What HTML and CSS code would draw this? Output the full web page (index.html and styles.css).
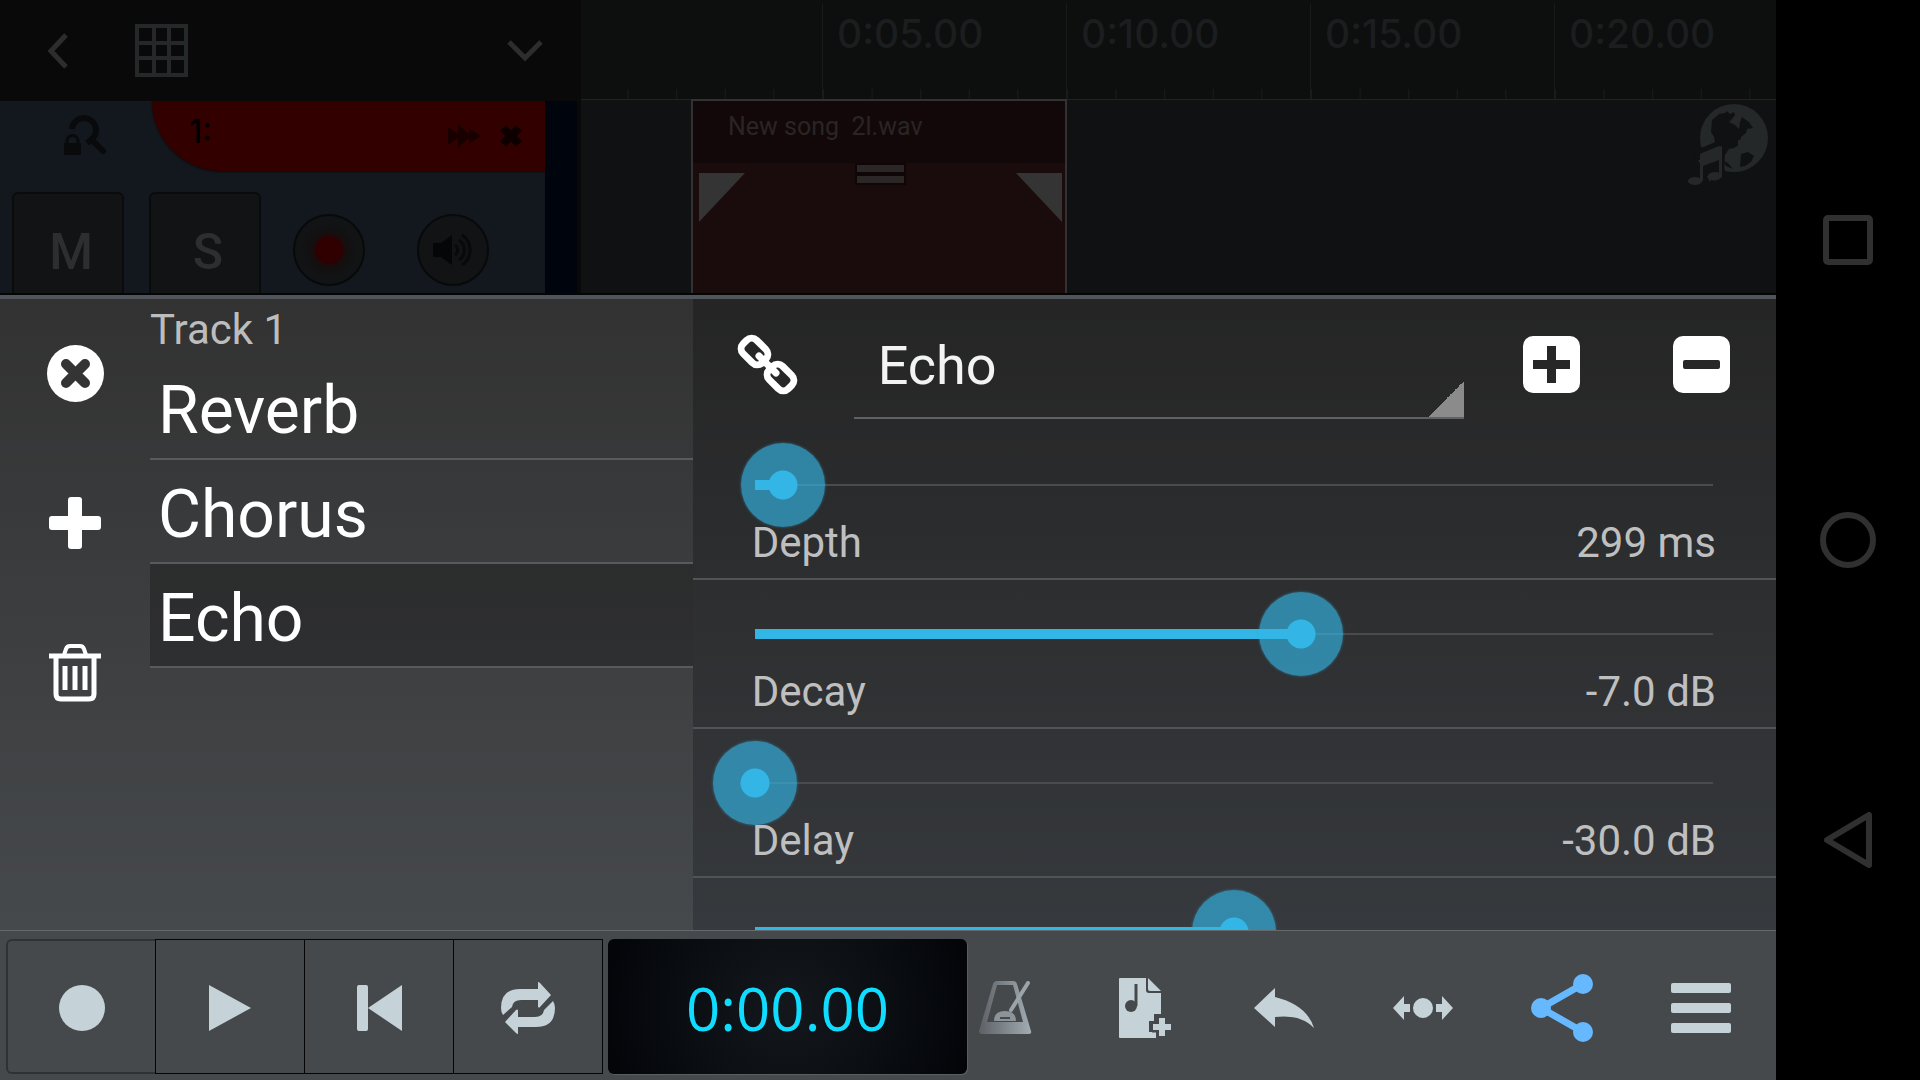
FILE: index.html
```html
<!DOCTYPE html>
<html lang="en">
  <head>
    <meta charset="UTF-8" />
    <meta name="viewport" content="width=device-width, initial-scale=1.0" />
    <title>Track 1 - Effects</title>
    <link rel="stylesheet" href="styles.css">
  </head>
  <body>
    <main class="app">
      <section class="arranger">
        <div class="tracks">
          <header class="tracks-bar">
            <button type="button" class="back" aria-label="Back">
              <svg width="20" height="36" viewBox="0 0 20 36"><path d="M18 2 3 18l15 16" fill="none" stroke="#2d2d2d" stroke-width="5" /></svg>
            </button>
            <button type="button" class="grid-btn" aria-label="Grid">
              <svg width="53" height="53" viewBox="0 0 53 53"><path d="M2 2h49v49H2zM19 2v49M34 2v49M2 19h49M2 34h49" fill="none" stroke="#252828" stroke-width="4" /></svg>
            </button>
            <button type="button" aria-label="Expand">
              <svg width="36" height="22" viewBox="0 0 36 22"><path d="M2 2l16 16L34 2" fill="none" stroke="#2d2d2d" stroke-width="5" /></svg>
            </button>
          </header>
          <div class="track">
            <div class="track-body">
              <div class="track-head">
                <button type="button" class="zoom-lock" aria-label="Lock zoom">
                  <svg width="44" height="42" viewBox="0 0 44 42">
                    <path d="M9 14a12 12 0 1 1 20 10l-5 4" fill="none" stroke="#090a0b" stroke-width="6" />
                    <path d="M29 25l11 11" stroke="#090a0b" stroke-width="6" stroke-linecap="round" />
                    <path d="M4 29v-3a5 5 0 0 1 11 0v3" fill="none" stroke="#090a0b" stroke-width="3" />
                    <path d="M1 28h17v12H1z" fill="#090a0b" />
                  </svg>
                </button>
                <div class="track-name">
                  <span>1:</span>
                  <svg width="33" height="26" viewBox="0 0 33 26"><path d="M0 4l10 7V1l11 10V5l12 8-12 8v-6L10 25V15L0 22z" fill="#180000" /></svg>
                  <svg width="24" height="24" viewBox="0 0 24 24"><path d="M4 4l16 16M20 4 4 20" fill="none" stroke="#0d0000" stroke-width="8" /></svg>
                </div>
              </div>
              <div class="track-buttons">
                <button type="button" class="key">M</button>
                <button type="button" class="key">S</button>
                <button type="button" class="round" aria-label="Arm recording"><span class="rec-dot"></span></button>
                <button type="button" class="round" aria-label="Monitor">
                  <svg width="40" height="36" viewBox="0 0 40 36">
                    <path d="M0 11h8L19 3v30L8 25H0z" fill="#050607" />
                    <path d="M22 13a6 6 0 0 1 0 10M26 8a12 12 0 0 1 0 20M29 3a18 18 0 0 1 0 30" fill="none" stroke="#08090a" stroke-width="3" />
                  </svg>
                </button>
              </div>
            </div>
          </div>
        </div>
        <div class="timeline">
          <div class="ruler">
            <div class="mark first"></div>
            <div class="mark">0:05.00</div>
            <div class="mark">0:10.00</div>
            <div class="mark">0:15.00</div>
            <div class="mark">0:20.00</div>
          </div>
          <div class="lane">
            <div class="clip">
              <div class="clip-name">New song&nbsp; 2l.wav</div>
              <div class="clip-handles">
                <svg width="46" height="49" viewBox="0 0 46 49"><path d="M0 0h46L0 49z" fill="#343434" /></svg>
                <div class="grip"><i></i><i></i></div>
                <svg width="46" height="49" viewBox="0 0 46 49"><path d="M0 0h46v49z" fill="#343434" /></svg>
              </div>
            </div>
            <button type="button" class="online" aria-label="Online songs">
              <svg width="80" height="82" viewBox="0 0 80 82">
                <circle cx="46" cy="34" r="34" fill="#252829" />
                <path d="M24 16l7-6 6-1 2-2 3 3 4-2 1 3-3 4-3 3 6 3 4 4 1-7 2-5 4 3 3 2 4 6-6 1-1 4-5 4-2 8-5 3-5 1-4 6-1 6 4 2 5 6-7-3-5-8-5-9-2-12-3-5zM53 50l7-2 6 4-3 6-6 4-5 1z" fill="#101113" />
                <path d="M50 36q4-1 5 2l-1 7-4-2z" fill="#252829" />
                <path d="M10 56V48l24-10v34a8 8 0 0 1-12 6" fill="#252829" stroke="#101113" stroke-width="5" />
                <path d="M12 50l22-8v12l-19 7v13H12z" fill="#252829" />
                <path d="M15 62l16-6v16H15z" fill="#101113" />
                <path d="M31 52h3v20h-3zM12 55h3v22h-3z" fill="#252829" />
                <ellipse cx="27" cy="72" rx="7" ry="4" fill="#252829" />
                <ellipse cx="7" cy="77" rx="7" ry="4" fill="#252829" />
              </svg>
            </button>
          </div>
        </div>
      </section>

      <section class="effects">
        <div class="chain">
          <div class="chain-tools">
            <button type="button" aria-label="Close effects">
              <svg width="57" height="57" viewBox="0 0 57 57">
                <circle cx="28.5" cy="28.5" r="28.5" fill="#fff" />
                <path d="M19 19l19 19M38 19 19 38" stroke="#343434" stroke-width="10" stroke-linecap="round" />
              </svg>
            </button>
            <button type="button" aria-label="Add effect">
              <svg width="52" height="52" viewBox="0 0 52 52">
                <rect x="19" width="14" height="52" rx="3" fill="#fff" />
                <rect y="19" width="52" height="14" rx="3" fill="#fff" />
              </svg>
            </button>
            <button type="button" aria-label="Delete effect">
              <svg width="52" height="58" viewBox="0 0 52 58" fill="none" stroke="#fff">
                <path d="M15 11l2-6q1-3 4-3h10q3 0 4 3l2 6" stroke-width="4" />
                <path d="M0 12h52" stroke-width="5" />
                <path d="M7 14v36q0 5 5 5h28q5 0 5-5V14" stroke-width="5" />
                <path d="M16 22v24M26 22v24M36 22v24" stroke-width="5" />
              </svg>
            </button>
          </div>
          <div class="chain-list">
            <h1>Track 1</h1>
            <button type="button" class="effect">Reverb</button>
            <button type="button" class="effect">Chorus</button>
            <button type="button" class="effect selected">Echo</button>
          </div>
        </div>

        <div class="params">
          <div class="params-head">
            <button type="button" aria-label="Link">
              <svg width="61" height="61" viewBox="0 0 61 61" fill="none" stroke="#fff" stroke-width="7">
                <rect x="4" y="8" width="27" height="19" rx="7" transform="rotate(45 17.5 17.5)" />
                <rect x="30" y="34" width="27" height="19" rx="7" transform="rotate(45 43.5 43.5)" />
                <path d="M22 22l17 17" stroke-linecap="round" />
              </svg>
            </button>
            <select class="preset" aria-label="Effect">
              <option>Echo</option>
            </select>
            <button type="button" aria-label="Add preset">
              <svg width="57" height="57" viewBox="0 0 57 57">
                <rect width="57" height="57" rx="10" fill="#fff" />
                <path d="M28.5 10v37M10 28.5h37" stroke="#272727" stroke-width="9" />
              </svg>
            </button>
            <button type="button" class="remove" aria-label="Remove preset">
              <svg width="57" height="57" viewBox="0 0 57 57">
                <rect width="57" height="57" rx="10" fill="#fff" />
                <rect x="10" y="24" width="37" height="9" rx="2" fill="#272727" />
              </svg>
            </button>
          </div>
          <div class="param">
            <input type="range" id="depth" min="0" max="100" value="3" style="--value: 3" />
            <div class="param-text">
              <label for="depth">Depth</label>
              <output for="depth">299 ms</output>
            </div>
          </div>
          <div class="param">
            <input type="range" id="decay" min="0" max="100" value="57" style="--value: 57" />
            <div class="param-text">
              <label for="decay">Decay</label>
              <output for="decay">-7.0 dB</output>
            </div>
          </div>
          <div class="param">
            <input type="range" id="delay" min="0" max="100" value="0" style="--value: 0" />
            <div class="param-text">
              <label for="delay">Delay</label>
              <output for="delay">-30.0 dB</output>
            </div>
          </div>
          <div class="param">
            <input type="range" aria-label="Level" min="0" max="100" value="50" style="--value: 50" />
          </div>
        </div>
      </section>

      <footer class="transport">
        <div class="transport-keys">
          <button type="button" class="record" aria-label="Record">
            <svg width="46" height="46" viewBox="0 0 46 46"><circle cx="23" cy="23" r="23" /></svg>
          </button>
          <button type="button" aria-label="Play">
            <svg width="42" height="46" viewBox="0 0 42 46"><path d="M0 0l42 23L0 46z" /></svg>
          </button>
          <button type="button" aria-label="Rewind">
            <svg width="45" height="46" viewBox="0 0 45 46"><rect width="11" height="46" rx="2" /><path d="M45 0v46L11 23z" /></svg>
          </button>
          <button type="button" aria-label="Loop">
            <svg width="54" height="52" viewBox="0 0 54 52">
              <path d="M2 33Q0 30 0 26 0 7 19 7h18V0q1 0 2 1l11 12-11 12q-1 1-2 0v-7H20q-8 0-9 7z" />
              <path d="M52 19q2 3 2 7 0 19-19 19H17v7q-1 0-2-1L4 40l11-12q1-1 2 0v7h17q8 0 9-7z" />
            </svg>
          </button>
        </div>
        <div class="clock">0:00.00</div>
        <div class="actions">
          <button type="button" class="metronome" aria-label="Metronome">
            <svg width="53" height="53" viewBox="0 0 53 53">
              <defs>
                <linearGradient id="fade"><stop offset="0" stop-color="#5c6165" /><stop offset="1" stop-color="#a2acb2" /></linearGradient>
              </defs>
              <path d="M14 3q1-3 4-3h16q3 0 4 3l14 47q1 3-2 3H3q-3 0-3-3zM18 4 8 41h36L34 4z" fill="url(#fade)" fill-rule="evenodd" />
              <path d="M15 40q0-10 11-10t11 10z" fill="#8c9499" />
              <path d="M21 37h10" stroke="#46494c" stroke-width="2" />
              <path d="M32 29 49 2" stroke="#9aa4aa" stroke-width="4" stroke-linecap="round" />
            </svg>
          </button>
          <button type="button" aria-label="Add audio file">
            <svg width="52" height="60" viewBox="0 0 52 60">
              <path d="M0 1q0-1 1-1h26v12q0 3 3 3h12v21h-7v7h-5v11h7v6H1q-1 0-1-1z" />
              <path d="M29 0l13 13H31q-2 0-2-2z" />
              <path d="M17 6v22" stroke="#46494c" stroke-width="3" />
              <circle cx="12" cy="28" r="6" fill="#46494c" />
              <path d="M43 39v20M33 49h20" stroke="#46494c" stroke-width="11" />
              <path d="M43 40v18M34 49h18" stroke="#c5d3d9" stroke-width="6" />
            </svg>
          </button>
          <button type="button" aria-label="Undo">
            <svg width="60" height="40" viewBox="0 0 60 40"><path d="M0 20 21 0v9q32 8 39 31Q47 26 21 29v10z" /></svg>
          </button>
          <button type="button" aria-label="Snap">
            <svg width="60" height="26" viewBox="0 0 60 26"><path d="M0 13 11 1v8h6v8h-6v8zM60 13 49 1v8h-6v8h6v8z" /><circle cx="30" cy="13" r="10" /></svg>
          </button>
          <button type="button" aria-label="Share">
            <svg class="share" width="62" height="68" viewBox="0 0 62 68">
              <circle cx="10" cy="34" r="10" /><circle cx="52" cy="10" r="10" /><circle cx="52" cy="58" r="10" />
              <path d="M52 10 10 34l42 24" fill="none" stroke-width="7" />
            </svg>
          </button>
          <button type="button" aria-label="Menu">
            <svg width="60" height="50" viewBox="0 0 60 50"><rect width="60" height="10" rx="2" /><rect y="20" width="60" height="10" rx="2" /><rect y="40" width="60" height="10" rx="2" /></svg>
          </button>
        </div>
      </footer>
    </main>

    <nav class="system-nav">
      <button type="button" aria-label="Recent apps">
        <svg width="50" height="50" viewBox="0 0 50 50"><rect x="3" y="3" width="44" height="44" rx="2" /></svg>
      </button>
      <button type="button" aria-label="Home">
        <svg width="56" height="56" viewBox="0 0 56 56"><circle cx="28" cy="28" r="25" /></svg>
      </button>
      <button type="button" aria-label="Back">
        <svg width="50" height="56" viewBox="0 0 50 56"><path d="M46 3v50L4 28z" /></svg>
      </button>
    </nav>
  </body>
</html>
```

FILE: styles.css
```css
* {
  box-sizing: border-box;
}

body {
  display: flex;
  height: 100vh;
  margin: 0;
  background-color: black;
  color: white;
  font-family: Roboto, sans-serif;
  overflow: hidden;
}

button {
  display: flex;
  align-items: center;
  justify-content: center;
  padding: 0;
  border: none;
  background: none;
  color: inherit;
  font-family: inherit;
  cursor: pointer;
}

svg {
  display: block;
  flex: none;
}

.app {
  display: flex;
  flex-direction: column;
  flex: 1;
  min-width: 0;
}

/* dimmed arranger behind the effects panel */
.arranger {
  display: flex;
  flex: none;
  height: 295px;
  border-bottom: 2px solid #050506;
  overflow: hidden;
}

.tracks {
  flex: none;
  width: 581px;
  background-color: #090909;
}

.tracks-bar {
  display: flex;
  align-items: center;
  height: 101px;
  padding: 0 38px 0 48px;
}

.grid-btn {
  margin: 0 auto 0 67px;
}

.track {
  height: 192px;
  padding-right: 4px;
  background: #090909;
}

.track-body {
  height: 192px;
  background-color: #13181f;
  border-right: 32px solid #00050d;
}

.track-head {
  display: flex;
  height: 70px;
}

.zoom-lock {
  width: 152px;
  padding-left: 18px;
}

.track-name {
  display: flex;
  align-items: center;
  flex: 1;
  gap: 18px;
  padding: 0 22px 0 37px;
  border-bottom-left-radius: 70px;
  background-color: #330000;
  box-shadow: 0 1px 2px #0b0c0d;
  color: black;
  font-family: Inter, sans-serif;
  font-size: 32px;
  font-weight: 500;
  line-height: 60px;
}

.track-name span {
  margin-right: auto;
  padding-bottom: 9px;
}

.track-buttons {
  display: flex;
  padding: 21px 0 0 12px;
}

.key {
  width: 112px;
  height: 116px;
  margin-right: 25px;
  padding: 4px 0 0 6px;
  border: 2px solid #0a0b0c;
  border-radius: 6px;
  background-color: #121314;
  color: #2c2e2f;
  font-size: 50px;
  font-weight: 500;
}

.round {
  width: 72px;
  height: 72px;
  margin: 22px 45px 0 7px;
  border: 2px solid #08090a;
  border-radius: 50%;
  background-color: #121314;
}

.rec-dot {
  width: 28px;
  height: 28px;
  border-radius: 50%;
  background-color: #300000;
  box-shadow: 0 0 6px 4px #1d0b0c;
}

.timeline {
  flex: 1;
  min-width: 0;
}

.ruler {
  display: flex;
  height: 100px;
  padding-top: 4px;
  border-bottom: 1px solid #1a2624;
  background-color: #0c0f0e;
  overflow: hidden;
}

.mark {
  flex: none;
  width: 244px;
  padding-left: 14px;
  border-left: 1px solid #191b1b;
  background: linear-gradient(90deg, #191b1b 1px, transparent 1px) 0 100% / 20% 10px repeat-x;
  color: #1b1d1e;
  font-family: Inter, sans-serif;
  font-size: 39px;
  font-weight: 500;
  line-height: 60px;
}

.mark.first {
  margin-left: -3px;
}

.lane {
  position: relative;
  height: 193px;
  background-color: #101113;
}

.clip {
  position: absolute;
  top: -1px;
  left: 110px;
  width: 376px;
  height: 200px;
  border: 2px solid #323232;
  background-color: #1a0b0c;
}

.clip-name {
  height: 62px;
  padding-left: 35px;
  background-color: #130809;
  color: #292525;
  font-size: 25px;
  line-height: 52px;
}

.clip-handles {
  display: flex;
  justify-content: space-between;
  padding: 10px 3px 0 6px;
}

.grip {
  margin-top: -10px;
}

.grip i {
  display: block;
  width: 51px;
  height: 11px;
  border: 2px solid #0e0607;
  background-color: #2b2727;
}

.online {
  position: absolute;
  top: 4px;
  right: 8px;
}

/* effects panel */
.effects {
  display: grid;
  grid-template-columns: 39% 1fr;
  flex: 1;
  min-height: 0;
  border-top: 4px solid #50555b;
}

.chain {
  display: flex;
  background: linear-gradient(#323232, #46494c);
}

.chain-tools {
  display: flex;
  flex-direction: column;
  align-items: center;
  gap: 95px;
  width: 150px;
  padding-top: 46px;
}

.chain-list {
  flex: 1;
}

h1 {
  margin: 0;
  padding-top: 4px;
  color: #bdbdbd;
  font-size: 42px;
  font-weight: 400;
  line-height: 53px;
}

.effect {
  justify-content: flex-start;
  width: 100%;
  height: 104px;
  padding: 6px 8px 0;
  border-bottom: 2px solid #595a5c;
  font-size: 66px;
}

.effect.selected {
  background-color: rgba(0, 0, 0, 0.25);
}

.params {
  min-width: 0;
  background: linear-gradient(#252525, #36393d);
  overflow: hidden;
}

.params-head {
  display: flex;
  align-items: flex-start;
  height: 132px;
  padding: 32px 46px 0 44px;
}

.preset {
  flex: 1;
  min-width: 0;
  height: 88px;
  margin: 0 59px 0 56px;
  padding: 0 40px 18px 24px;
  border: none;
  border-bottom: 2px solid #606162;
  border-radius: 0;
  appearance: none;
  background: linear-gradient(to bottom right, transparent 50%, #8b8b8b 50%) 100% 100% / 36px 36px no-repeat;
  color: #f3f3f3;
  font-family: inherit;
  font-size: 54px;
}

.params-head > button {
  height: 66px;
}

.remove {
  margin-left: 93px;
}

.param {
  height: 149px;
  padding: 12px 21px 0 20px;
  border-bottom: 2px solid #515355;
}

.param input {
  display: block;
  width: 100%;
  height: 84px;
  margin: 0;
  appearance: none;
  background:
    linear-gradient(#33b5e5, #33b5e5) 42px 50% / calc((100% - 84px) * var(--value) / 100) 10px no-repeat,
    linear-gradient(#4a4b4d, #4a4b4d) 50% 50% / calc(100% - 84px) 2px no-repeat;
}

.param input::-webkit-slider-thumb {
  width: 84px;
  height: 84px;
  appearance: none;
  border-radius: 50%;
  background: radial-gradient(circle, #33b5e5 14px, rgba(51, 181, 229, 0.65) 15px);
  box-shadow: 0 0 3px rgba(51, 181, 229, 0.5);
}

.param-text {
  position: relative;
  display: flex;
  justify-content: space-between;
  margin-top: -9px;
  padding: 0 39px;
  color: #bfbfbf;
  font-size: 42px;
  line-height: 50px;
}

/* transport */
.transport {
  display: flex;
  flex: none;
  height: 150px;
  padding: 8px 6px 6px;
  border-top: 1px solid #66696b;
  background-color: #46494c;
  fill: #c5d3d9;
}

.transport-keys {
  display: flex;
}

.transport-keys button {
  width: 150px;
  margin-left: -1px;
  padding-top: 2px;
  border: 1px solid #050505;
}

.transport-keys .record {
  margin-left: 0;
  border: 2px solid #2f3234;
  border-right: none;
  border-radius: 6px 0 0 6px;
}

.clock {
  width: 359px;
  margin-left: 5px;
  border-radius: 6px;
  background: radial-gradient(circle, #14181c, #020408);
  box-shadow: 1px 1px 1px #5d6063;
  color: #0fdcff;
  font-family: "Open Sans", sans-serif;
  font-size: 60px;
  font-weight: 500;
  line-height: 138px;
  text-align: center;
}

.actions {
  display: flex;
  flex: 1;
}

.actions button {
  flex: 1;
  padding-top: 2px;
}

.actions .metronome {
  flex: 0 0 109px;
  justify-content: flex-start;
  padding-left: 12px;
}

.share {
  fill: #66b8ff;
  stroke: #66b8ff;
  stroke-width: 0;
}

.system-nav {
  display: flex;
  flex-direction: column;
  flex: none;
  width: 144px;
  padding: 90px 0;
}

.system-nav button {
  flex: 1;
}

.system-nav svg {
  fill: none;
  stroke: #303030;
  stroke-width: 6px;
  stroke-linejoin: round;
}
```
